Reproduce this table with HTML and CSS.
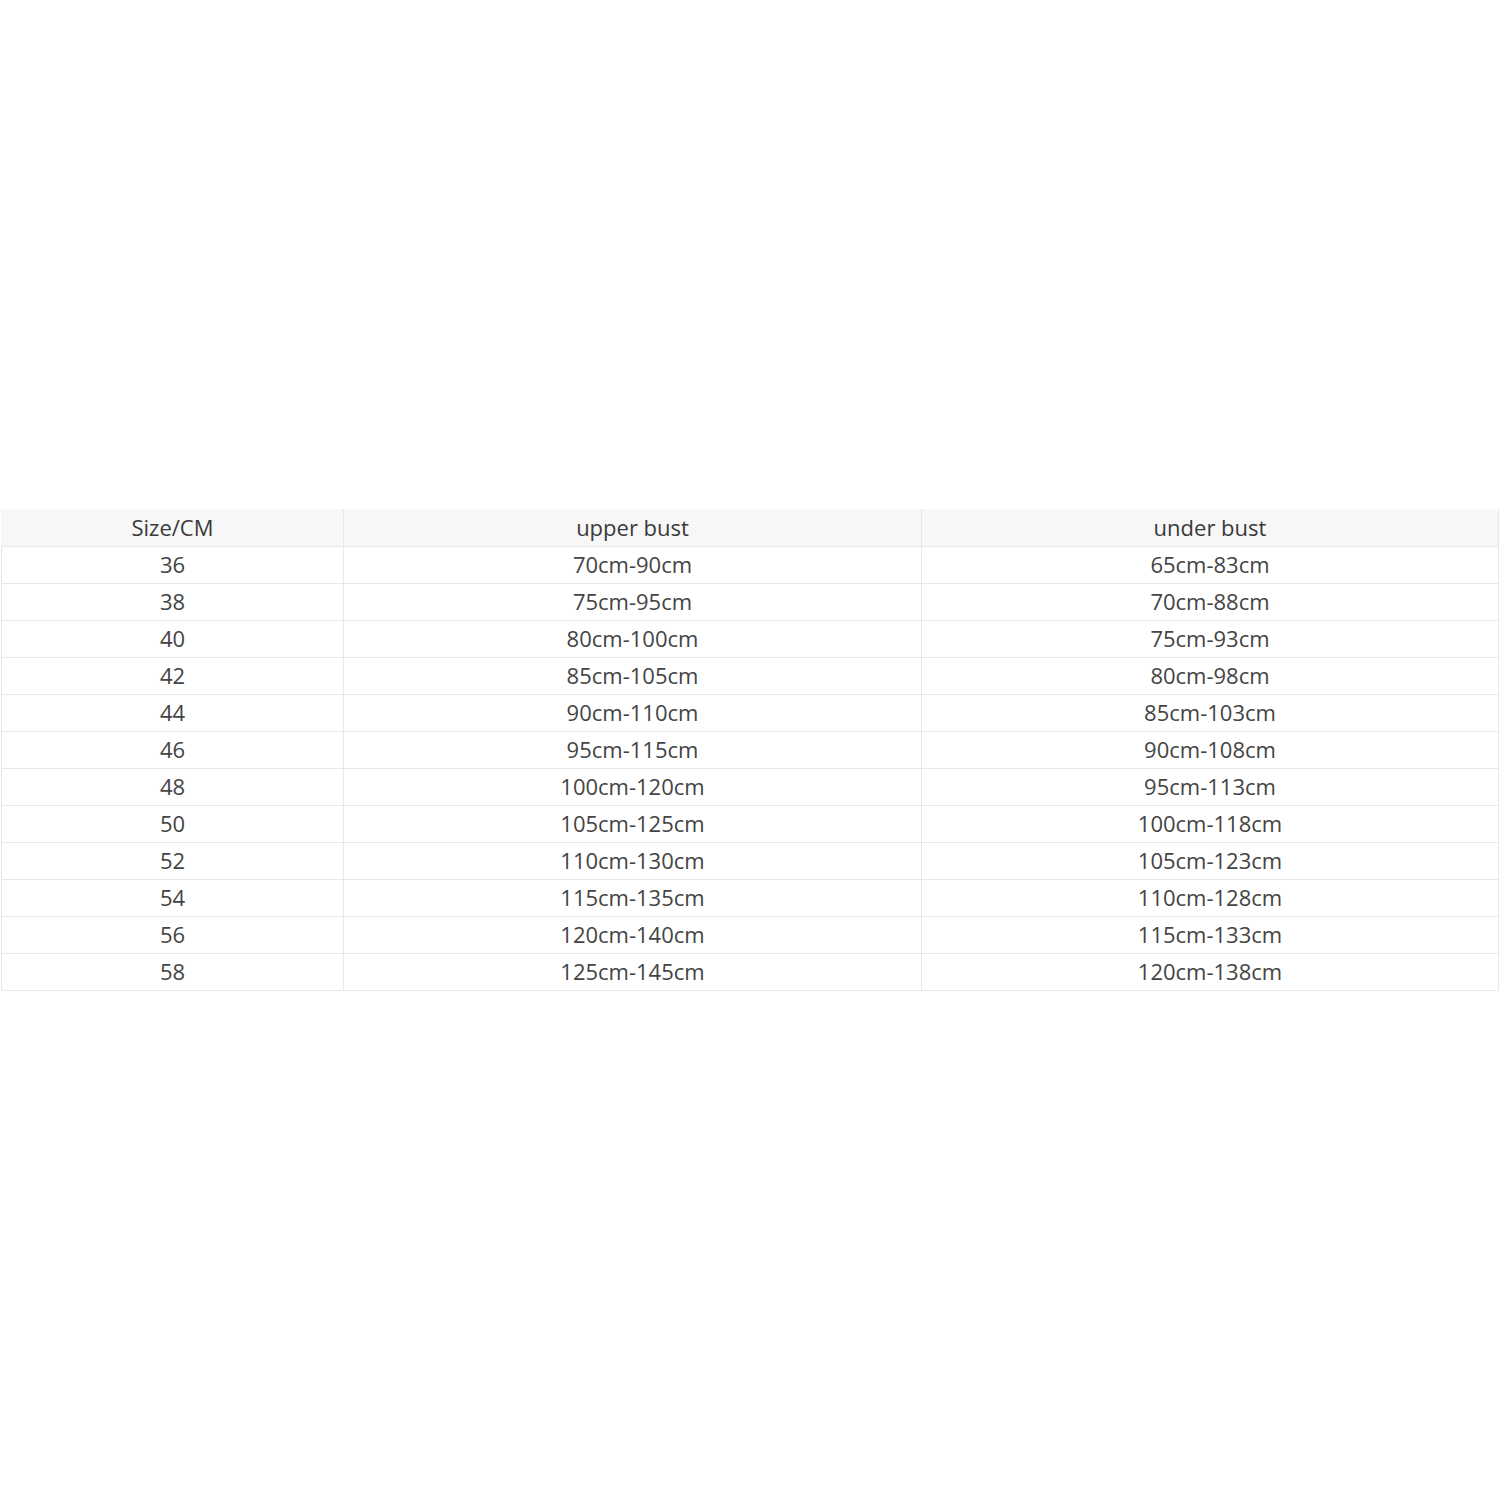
FILE: index.html
```html
<!DOCTYPE html>
<html>
<head>
<meta charset="utf-8">
<link rel="stylesheet" href="styles.css">
</head>
<body>
<table class="chart">
<colgroup><col class="c1"><col class="c2"><col class="c3"></colgroup>
<thead>
<tr><th>Size/CM</th><th>upper bust</th><th>under bust</th></tr>
</thead>
<tbody>
<tr><td>36</td><td>70cm-90cm</td><td>65cm-83cm</td></tr>
<tr><td>38</td><td>75cm-95cm</td><td>70cm-88cm</td></tr>
<tr><td>40</td><td>80cm-100cm</td><td>75cm-93cm</td></tr>
<tr><td>42</td><td>85cm-105cm</td><td>80cm-98cm</td></tr>
<tr><td>44</td><td>90cm-110cm</td><td>85cm-103cm</td></tr>
<tr><td>46</td><td>95cm-115cm</td><td>90cm-108cm</td></tr>
<tr><td>48</td><td>100cm-120cm</td><td>95cm-113cm</td></tr>
<tr><td>50</td><td>105cm-125cm</td><td>100cm-118cm</td></tr>
<tr><td>52</td><td>110cm-130cm</td><td>105cm-123cm</td></tr>
<tr><td>54</td><td>115cm-135cm</td><td>110cm-128cm</td></tr>
<tr><td>56</td><td>120cm-140cm</td><td>115cm-133cm</td></tr>
<tr><td>58</td><td>125cm-145cm</td><td>120cm-138cm</td></tr>
</tbody>
</table>
</body>
</html>
```
FILE: styles.css
```css
html, body {
  margin: 0;
  padding: 0;
  background: #ffffff;
}
body {
  padding-top: 509px;
  padding-left: 1px;
}
.chart {
  border-collapse: collapse;
  table-layout: fixed;
  width: 1497px;
  font-family: "Open Sans", "Noto Sans", sans-serif;
  font-size: 22px;
  color: #444444;
}
.c1 { width: 342px; }
.c2 { width: 578px; }
.c3 { width: 577px; }
.chart th, .chart td {
  height: 36px;
  box-sizing: border-box;
  padding: 0 0 1px 0;
  border: 1px solid #e8e8e8;
  text-align: center;
  vertical-align: middle;
  font-weight: normal;
  line-height: 35px;
}
.chart thead th {
  background: #f7f7f7;
  border-top-color: #f7f7f7;
  border-left-color: #f7f7f7;
  color: #3a3a3a;
}
.chart thead th + th {
  border-left-color: #e8e8e8;
}
```
